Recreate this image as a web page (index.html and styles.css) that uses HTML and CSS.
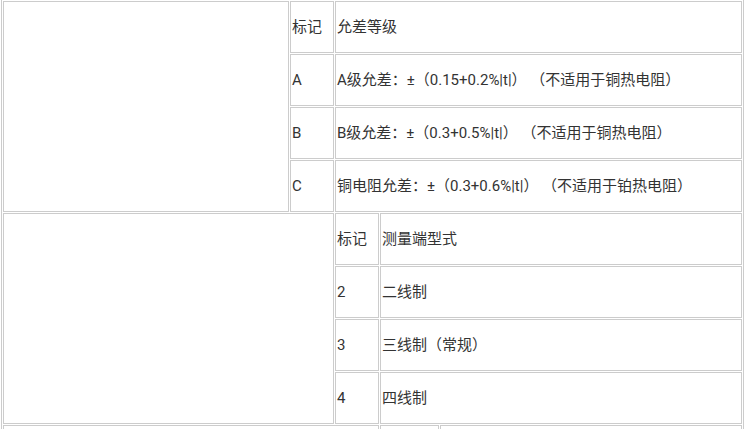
FILE: index.html
```html
<!DOCTYPE html>
<html lang="zh-CN">
<head>
<meta charset="utf-8">
<title>热电阻规格</title>
<link rel="stylesheet" href="styles.css">
</head>
<body>
<table class="spec">
  <colgroup>
    <col class="c1">
    <col class="c2">
    <col class="c3">
    <col class="c4">
    <col class="c5">
  </colgroup>
  <tbody>
    <tr>
      <td rowspan="4"></td>
      <td>标记</td>
      <td colspan="3">允差等级</td>
    </tr>
    <tr>
      <td>A</td>
      <td colspan="3">A级允差：±（0.15+0.2%|t|） （不适用于铜热电阻）</td>
    </tr>
    <tr>
      <td>B</td>
      <td colspan="3">B级允差：±（0.3+0.5%|t|） （不适用于铜热电阻）</td>
    </tr>
    <tr>
      <td>C</td>
      <td colspan="3">铜电阻允差：±（0.3+0.6%|t|） （不适用于铂热电阻）</td>
    </tr>
    <tr>
      <td colspan="2" rowspan="4"></td>
      <td>标记</td>
      <td colspan="2">测量端型式</td>
    </tr>
    <tr>
      <td>2</td>
      <td colspan="2">二线制</td>
    </tr>
    <tr>
      <td>3</td>
      <td colspan="2">三线制（常规）</td>
    </tr>
    <tr>
      <td>4</td>
      <td colspan="2">四线制</td>
    </tr>
    <tr>
      <td colspan="3"></td>
      <td></td>
      <td></td>
    </tr>
  </tbody>
</table>
</body>
</html>
```

FILE: styles.css
```css
html, body {
  margin: 0;
  padding: 0;
  background: #ffffff;
  overflow: hidden;
}

.spec {
  box-sizing: border-box;
  width: 743px;
  margin: -1px 0 0 1px;
  table-layout: fixed;
  border-collapse: separate;
  border-spacing: 1px;
  border: 1px solid #cccccc;
  font-family: Roboto, "Noto Sans CJK SC", sans-serif;
  font-size: 15px;
  line-height: 20px;
  color: #333333;
}

.spec .c1 { width: 286px; }
.spec .c2 { width: 44px; }
.spec .c3 { width: 44px; }
.spec .c4 { width: 59px; }
.spec .c5 { width: 302px; }

.spec td {
  box-sizing: border-box;
  height: 52px;
  padding: 0 1px;
  border: 1px solid #cccccc;
  vertical-align: middle;
  white-space: nowrap;
  overflow: hidden;
}
```
